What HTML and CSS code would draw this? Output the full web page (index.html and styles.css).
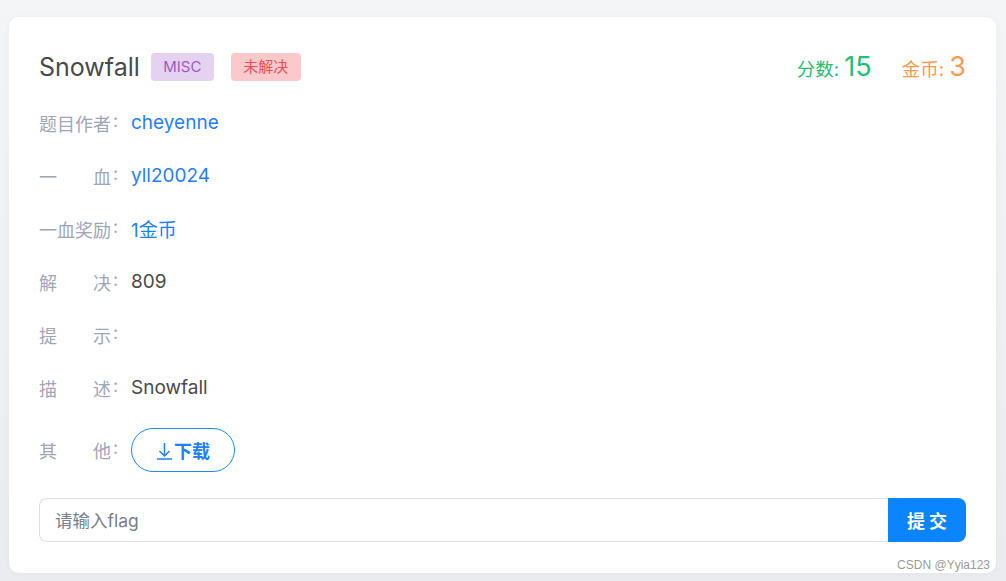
FILE: index.html
```html
<!DOCTYPE html>
<html lang="zh">
<head>
<meta charset="utf-8">
<title>Snowfall</title>
<link rel="stylesheet" href="styles.css">
</head>
<body>
<div class="card">
  <div class="header">
    <div class="title-group">
      <h1 class="title">Snowfall</h1>
      <span class="tag tag-misc">MISC</span>
      <span class="tag tag-unsolved">未解决</span>
    </div>
    <div class="stats">
      <span class="stat stat-score">分数: <b class="num">15</b></span>
      <span class="stat stat-coin">金币: <b class="num">3</b></span>
    </div>
  </div>
  <div class="rows">
    <div class="row"><span class="label"><span class="name">题目作者</span>:</span><span class="value link">cheyenne</span></div>
    <div class="row"><span class="label"><span class="name">一血</span>:</span><span class="value link">yll20024</span></div>
    <div class="row"><span class="label"><span class="name">一血奖励</span>:</span><span class="value link">1金币</span></div>
    <div class="row"><span class="label"><span class="name">解决</span>:</span><span class="value">809</span></div>
    <div class="row"><span class="label"><span class="name">提示</span>:</span><span class="value"></span></div>
    <div class="row"><span class="label"><span class="name">描述</span>:</span><span class="value">Snowfall</span></div>
    <div class="row row-btn"><span class="label"><span class="name">其他</span>:</span>
      <button class="dl-btn"><svg class="dl-icon" width="17" height="19" viewBox="0 0 17 19"><path d="M8.5 2v13M3.5 10l5 5 5-5M1 18h15" fill="none" stroke="currentColor" stroke-width="1.5"/></svg>下载</button>
    </div>
  </div>
  <div class="submit-row">
    <input class="flag-input" type="text" placeholder="请输入flag">
    <button class="submit-btn">提交</button>
  </div>
</div>
<div class="watermark">CSDN @Yyia123</div>
</body>
</html>
```

FILE: styles.css
```css
html, body {
  margin: 0;
  padding: 0;
}
body {
  width: 1006px;
  height: 581px;
  overflow: hidden;
  background: linear-gradient(#f4f5f7, #ebecef);
  font-family: Inter, "Noto Sans CJK SC", sans-serif;
  position: relative;
}
.card {
  margin: 17px 0 0 9px;
  width: 987px;
  height: 556px;
  box-sizing: border-box;
  padding: 29px 30px 31px 30px;
  background: #fff;
  border-radius: 10px;
  box-shadow: 0 0 8px rgba(0,0,0,0.04);
}
.header {
  height: 40px;
  display: flex;
  align-items: center;
  justify-content: space-between;
  margin-bottom: 24px;
}
.title-group {
  display: flex;
  align-items: center;
  margin-top: 2px;
}
.title {
  margin: 0;
  font-size: 25px;
  font-weight: 400;
  color: #4a4a4a;
  margin-right: 11px;
}
.tag {
  height: 28px;
  line-height: 28px;
  font-size: 15px;
  border-radius: 4px;
  box-sizing: border-box;
  text-align: center;
}
.tag-misc {
  background: #e5d1f0;
  color: #a35ac9;
  width: 63px;
  margin-right: 17px;
}
.tag-unsolved {
  background: #fbc8cb;
  color: #ef4f57;
  width: 70px;
}
.stats {
  display: flex;
  align-items: baseline;
  gap: 30px;
}
.stat {
  font-size: 18.5px;
}
.stat .num {
  font-weight: 400;
  font-size: 27px;
}
.stat-score { color: #23bf73; }
.stat-coin { color: #fc9a4e; }
.rows {
  display: flex;
  flex-direction: column;
}
.row {
  display: flex;
  align-items: center;
  height: 25px;
  margin-bottom: 28px;
  font-size: 18px;
}
.row-btn {
  height: 44px;
  margin-bottom: 26px;
}
.label {
  width: 92px;
  flex: none;
  color: #a1a5b8;
  display: flex;
}
.name {
  display: inline-block;
  width: 72px;
  margin-right: 2px;
  text-align: justify;
  text-align-last: justify;
}
.value {
  color: #4a4a4a;
  font-size: 19px;
}
.link {
  color: #1f80ff;
}
.dl-btn {
  width: 104px;
  height: 44px;
  border: 1px solid #1e88ff;
  border-radius: 22px;
  background: #fff;
  color: #1f80ff;
  font-family: Inter, "Noto Sans CJK SC", sans-serif;
  font-size: 18px;
  font-weight: 700;
  display: flex;
  align-items: center;
  justify-content: center;
  padding: 0;
}
.dl-icon {
  margin-right: 1px;
}
.submit-row {
  display: flex;
  height: 44px;
}
.flag-input {
  flex: 1;
  height: 44px;
  box-sizing: border-box;
  border: 1px solid #dcdfe6;
  border-right: none;
  border-radius: 8px 0 0 8px;
  padding: 0 15px;
  font-size: 17.5px;
  font-family: Inter, "Noto Sans CJK SC", sans-serif;
  outline: none;
}
.flag-input::placeholder {
  color: #778090;
}
.submit-btn {
  width: 78px;
  height: 44px;
  border: none;
  border-radius: 0 8px 8px 0;
  background: #0a84ff;
  color: #fff;
  font-family: "Noto Sans CJK SC", sans-serif;
  font-size: 18px;
  font-weight: 700;
  letter-spacing: 4px;
  padding: 0 0 0 4px;
}
.watermark {
  position: absolute;
  right: 16px;
  bottom: 9px;
  font-family: "Liberation Sans", sans-serif;
  font-size: 12px;
  color: #9a9a9a;
}
```
